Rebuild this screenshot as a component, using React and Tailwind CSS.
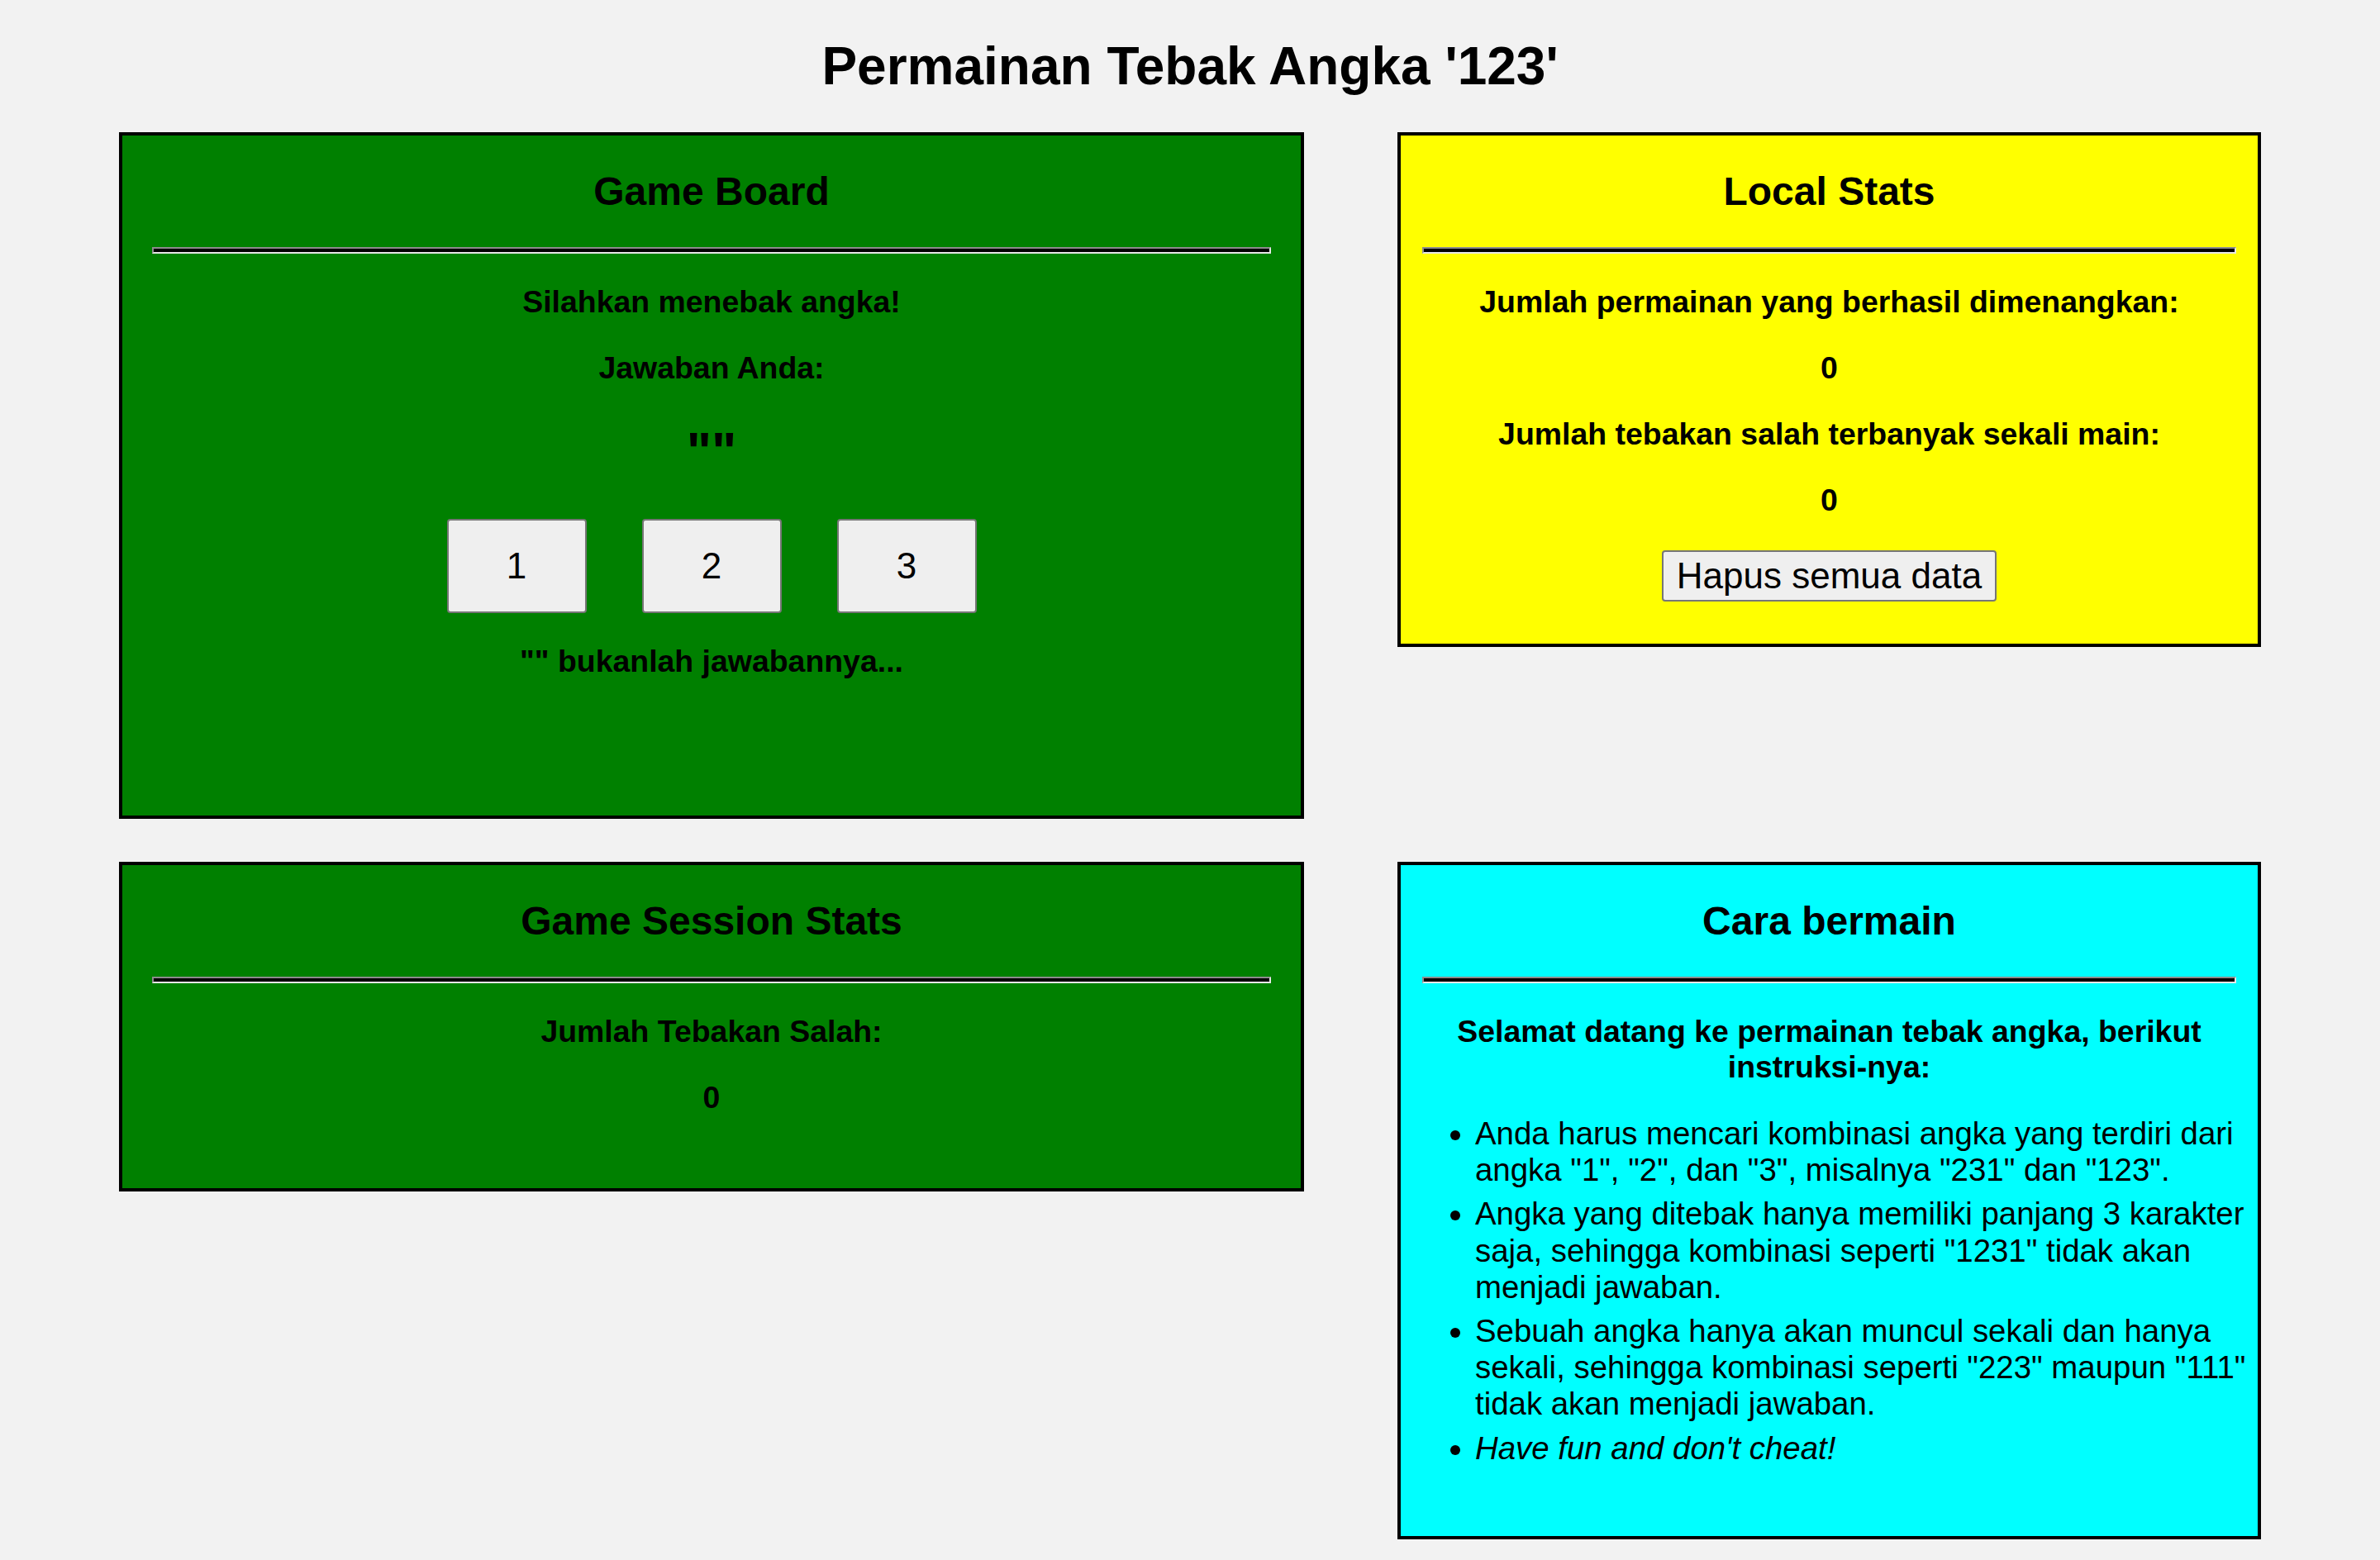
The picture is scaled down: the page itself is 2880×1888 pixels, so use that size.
import React from 'react'

const Rule = () => (
  <div className="mx-auto mt-[40px] h-[8px] w-[95%] border-2 border-t-[#8c8c8c] border-l-[#8c8c8c] border-r-[#e6e6e6] border-b-[#e6e6e6] bg-black" />
)

const PanelTitle = ({ children }) => (
  <h2 className="mt-[40px] text-center text-[48px] font-bold leading-[55px]">{children}</h2>
)

const Line = ({ children, className = '' }) => (
  <h3 className={`mt-[37px] text-center text-[37.44px] font-bold leading-[43px] ${className}`}>{children}</h3>
)

const Panel = ({ color, className = '', children }) => (
  <div className={`border-4 border-black ${color} ${className}`}>{children}</div>
)

const guessButtons = ['1', '2', '3']

const rules = [
  'Anda harus mencari kombinasi angka yang terdiri dari angka "1", "2", dan "3", misalnya "231" dan "123".',
  'Angka yang ditebak hanya memiliki panjang 3 karakter saja, sehingga kombinasi seperti "1231" tidak akan menjadi jawaban.',
  'Sebuah angka hanya akan muncul sekali dan hanya sekali, sehingga kombinasi seperti "223" maupun "111" tidak akan menjadi jawaban.',
]

export default function App() {
  return (
    <div className="min-h-screen bg-[#f2f2f2] pb-[27px] font-['Liberation_Sans',Arial,sans-serif] text-black">
      <h1 className="mt-0 pt-[43px] mb-[43px] text-center text-[64px] font-bold leading-[74px]">
        Permainan Tebak Angka '123'
      </h1>

      <div className="grid grid-cols-[1434px_1045px] items-start gap-x-[113px] gap-y-[52px] px-[144px]">
        <Panel color="bg-[#008000]" className="pb-[165px]">
          <PanelTitle>Game Board</PanelTitle>
          <Rule />
          <Line>Silahkan menebak angka!</Line>
          <Line>Jawaban Anda:</Line>
          <div className="mt-[43px] text-center text-[64px] font-bold leading-[74px]">{'""'}</div>
          <div className="mt-[44px] flex justify-center gap-[67px]">
            {guessButtons.map((n) => (
              <button
                key={n}
                className="h-[114px] w-[169px] rounded-[4px] border-2 border-[#767676] bg-[#efefef] text-[44px] leading-none"
              >
                {n}
              </button>
            ))}
          </div>
          <Line>{'"" bukanlah jawabannya...'}</Line>
        </Panel>

        <Panel color="bg-[#ffff00]" className="pb-[51px]">
          <PanelTitle>Local Stats</PanelTitle>
          <Rule />
          <Line>Jumlah permainan yang berhasil dimenangkan:</Line>
          <Line>0</Line>
          <Line>Jumlah tebakan salah terbanyak sekali main:</Line>
          <Line>0</Line>
          <div className="mt-[39px] flex justify-center">
            <button className="rounded-[4px] border-2 border-[#767676] bg-[#efefef] px-[16px] py-[2px] text-[44px] leading-[54px]">
              Hapus semua data
            </button>
          </div>
        </Panel>

        <Panel color="bg-[#008000]" className="pb-[88px]">
          <PanelTitle>Game Session Stats</PanelTitle>
          <Rule />
          <Line>Jumlah Tebakan Salah:</Line>
          <Line>0</Line>
        </Panel>

        <Panel color="bg-[#00ffff]" className="pb-[84px]">
          <PanelTitle>Cara bermain</PanelTitle>
          <Rule />
          <Line>Selamat datang ke permainan tebak angka, berikut instruksi-nya:</Line>
          <ul className="mt-[37px] list-disc pl-[90px] text-[38.4px] leading-[44.2px]">
            {rules.map((r) => (
              <li key={r} className="mb-[9px]">{r}</li>
            ))}
            <li className="italic">Have fun and don't cheat!</li>
          </ul>
        </Panel>
      </div>
    </div>
  )
}
